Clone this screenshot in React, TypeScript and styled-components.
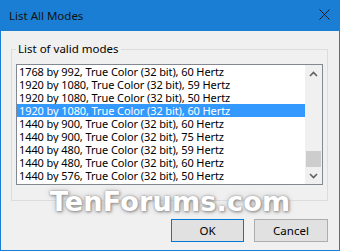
import React, { FC } from 'react';
import styled, { createGlobalStyle } from 'styled-components';

type Mode = { text: string; selected?: boolean };

const modes: Mode[] = [
  { text: '1768 by 992, True Color (32 bit), 60 Hertz' },
  { text: '1920 by 1080, True Color (32 bit), 59 Hertz' },
  { text: '1920 by 1080, True Color (32 bit), 50 Hertz' },
  { text: '1920 by 1080, True Color (32 bit), 60 Hertz', selected: true },
  { text: '1440 by 900, True Color (32 bit), 60 Hertz' },
  { text: '1440 by 900, True Color (32 bit), 75 Hertz' },
  { text: '1440 by 480, True Color (32 bit), 59 Hertz' },
  { text: '1440 by 480, True Color (32 bit), 60 Hertz' },
  { text: '1440 by 576, True Color (32 bit), 50 Hertz' },
];

const GlobalStyle = createGlobalStyle`
  html, body {
    margin: 0;
    padding: 0;
    background: #ffffff;
  }
  body {
    font-family: 'Noto Sans', 'Open Sans', sans-serif;
    font-size: 11px;
  }
`;

const Chevron: FC<{ down?: boolean }> = ({ down }) => (
  <svg width="9" height="6" viewBox="0 0 9 6">
    <path
      d={down ? 'M1 1 L4.5 4.5 L8 1' : 'M1 5 L4.5 1.5 L8 5'}
      fill="none"
      stroke="#606060"
      strokeWidth="1.6"
    />
  </svg>
);

const App: FC = () => (
  <>
    <GlobalStyle />
    <Window>
      <TitleBar>
        <Title>List All Modes</Title>
        <CloseButton>
          <svg width="11" height="11" viewBox="0 0 11 11">
            <path d="M0.5 0.5 L10.5 10.5 M10.5 0.5 L0.5 10.5" stroke="#1a1a1a" strokeWidth="1" />
          </svg>
        </CloseButton>
      </TitleBar>
      <Body>
        <GroupBox>
          <Legend>List of valid modes</Legend>
          <ListBox>
            <Rows>
              {modes.map((m) => (
                <Row key={m.text} selected={m.selected}>
                  {m.text}
                </Row>
              ))}
            </Rows>
            <ScrollBar>
              <ArrowBox>
                <Chevron />
              </ArrowBox>
              <Track>
                <Thumb />
              </Track>
              <ArrowBox>
                <Chevron down />
              </ArrowBox>
            </ScrollBar>
          </ListBox>
        </GroupBox>
        <ButtonRow>
          <DialogButton primary>OK</DialogButton>
          <DialogButton>Cancel</DialogButton>
        </ButtonRow>
      </Body>
      <Watermark>TenForums.com</Watermark>
    </Window>
  </>
);

const Window = styled.div`
  position: relative;
  width: 340px;
  height: 251px;
  box-sizing: border-box;
  display: flex;
  flex-direction: column;
  background: #f0f0f0;
  border: 1px solid #1a7fd4;
  border-top: none;
  overflow: hidden;
`;

const TitleBar = styled.div`
  height: 31px;
  margin: 0 -1px;
  flex-shrink: 0;
  display: flex;
  align-items: center;
  justify-content: space-between;
  background: #1a7fd4;
  padding: 0 10px 0 9px;
`;

const Title = styled.div`
  font-size: 11.5px;
  color: #111111;
`;

const CloseButton = styled.div`
  width: 11px;
  height: 11px;
  display: flex;
  margin-top: -2px;
`;

const Body = styled.div`
  flex: 1;
  display: flex;
  flex-direction: column;
  padding: 10px 0 0 10px;
`;

const GroupBox = styled.fieldset`
  box-sizing: border-box;
  width: 317px;
  height: 160px;
  margin: 0;
  padding: 7px 4px 0 4px;
  border: 1px solid #dcdcdc;
  min-width: 0;
`;

const Legend = styled.legend`
  padding: 0 2px;
  margin-left: 0;
  font-size: 11.5px;
  line-height: 16px;
  color: #000000;
`;

const ListBox = styled.div`
  box-sizing: border-box;
  width: 307px;
  height: 121px;
  display: flex;
  background: #ffffff;
  border: 1px solid #828790;
`;

const Rows = styled.div`
  flex: 1;
  display: flex;
  flex-direction: column;
  overflow: hidden;
`;

const Row = styled.div<{ selected?: boolean }>`
  height: 13px;
  line-height: 13px;
  padding-left: 2px;
  overflow: hidden;
  white-space: nowrap;
  font-size: 11px;
  letter-spacing: -0.1px;
  color: ${({ selected }) => (selected ? '#ffffff' : '#000000')};
  background: ${({ selected }) => (selected ? '#3399ff' : 'transparent')};
`;

const ScrollBar = styled.div`
  width: 17px;
  display: flex;
  flex-direction: column;
  background: #f0f0f0;
`;

const ArrowBox = styled.div`
  height: 17px;
  display: flex;
  align-items: center;
  justify-content: center;
`;

const Track = styled.div`
  flex: 1;
  display: flex;
  flex-direction: column;
  justify-content: flex-end;
`;

const Thumb = styled.div`
  height: 16px;
  margin: 0 1px;
  background: #cdcdcd;
`;

const ButtonRow = styled.div`
  display: flex;
  justify-content: flex-end;
  gap: 10px;
  margin-top: 18px;
  padding-right: 11px;
`;

const DialogButton = styled.button<{ primary?: boolean }>`
  box-sizing: border-box;
  width: ${({ primary }) => (primary ? '73px' : '74px')};
  height: 23px;
  padding: 0;
  font-family: 'Noto Sans', 'Open Sans', sans-serif;
  font-size: 11.5px;
  color: #000000;
  background: #e1e1e1;
  border: 1px solid ${({ primary }) => (primary ? '#0078d7' : '#adadad')};
  border-radius: 0;
`;

const Watermark = styled.div`
  position: absolute;
  left: 0;
  right: 0;
  top: 186px;
  text-align: center;
  font-family: 'DejaVu Sans', sans-serif;
  font-weight: 700;
  font-size: 27px;
  letter-spacing: 0.2px;
  color: #ffffff;
  text-shadow: 0 0 2px #9a9a9a, 1px 1px 3px #8a8a8a, 0 0 6px #c0c0c0;
  pointer-events: none;
`;

export default App;
